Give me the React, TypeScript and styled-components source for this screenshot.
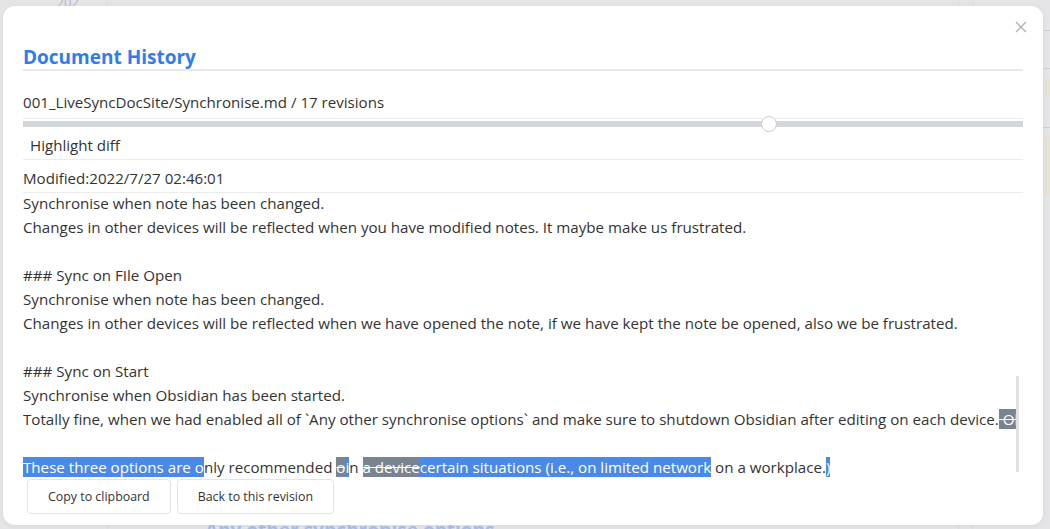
import { useLayoutEffect, useRef } from "react";
import styled, { createGlobalStyle } from "styled-components";

const Global = createGlobalStyle`
  html, body { margin: 0; padding: 0; }
  body {
    font-family: "Open Sans", "Noto Sans", sans-serif;
    background: #e5e5e8;
    overflow: hidden;
  }
`;

const Stage = styled.div`
  position: relative;
  width: 1050px;
  height: 529px;
  overflow: hidden;
  display: grid;
  grid-template-columns: 108px 1fr 92px;
  background: #e5e5e8;
`;

const Gutter = styled.div`
  border-right: 1px solid #dcdce0;
  color: #b8b8be;
  font-size: 13px;
  text-align: right;
  padding: 0 28px 0 0;
  line-height: 1;
  margin-top: -4px;
`;

const Page = styled.div`
  padding: 521px 0 0 97px;
`;

const PageHeading = styled.div`
  color: #a8c0ea;
  font-weight: 700;
  font-size: 19px;
  line-height: 1;
  white-space: nowrap;
`;

const SidePanel = styled.div`
  display: grid;
  grid-template-columns: 15px 1fr;
`;

const SideEdge = styled.div`
  border-left: 1px solid #dcdce0;
  border-right: 1px solid #dcdce0;
`;

const SideBody = styled.div`
  padding-top: 30px;
  display: flex;
  flex-direction: column;
`;

const SideRule = styled.div<{ $after: number }>`
  height: 1px;
  background: #cfcfd4;
  margin: 0 0 ${(p) => p.$after}px 50px;
`;

const SideNote = styled.div<{ $h: number; $after: number }>`
  height: ${(p) => p.$h}px;
  margin-bottom: ${(p) => p.$after}px;
  background: #e6e2d6;
  color: #c3b5b5;
  font-size: 15px;
  padding-left: 50px;
  line-height: 19px;
  white-space: pre;
`;

const Modal = styled.div`
  position: absolute;
  left: 3px;
  top: 6px;
  width: 1040px;
  height: 519px;
  box-sizing: border-box;
  padding: 38px 20px 11px;
  background: #fff;
  border-radius: 12px;
  box-shadow: 0 1px 6px rgba(0, 0, 0, 0.06);
  display: flex;
  flex-direction: column;
  color: #333;
`;

const Close = styled.button`
  position: absolute;
  top: 15px;
  right: 16px;
  width: 12px;
  height: 12px;
  padding: 0;
  border: 0;
  background: none;
  color: #b0b0b4;
  display: flex;
`;

const Title = styled.h2`
  margin: 0;
  padding-top: 1px;
  font-size: 19px;
  font-weight: 700;
  line-height: 24px;
  color: #2f7cf1;
  border-bottom: 2px solid #e7e9ec;
`;

const Info = styled.div`
  padding: 19px 0 4px;
  font-size: 15.1px;
  line-height: 24px;
  border-bottom: 1px solid #ececec;
`;

const Range = styled.input`
  -webkit-appearance: none;
  appearance: none;
  display: block;
  width: 100%;
  height: 6px;
  margin: 2px 0 0;
  background: #d3d6db;
  outline: none;

  &::-webkit-slider-thumb {
    -webkit-appearance: none;
    width: 16px;
    height: 16px;
    border-radius: 50%;
    background: #fff;
    border: 1px solid #c9cdd3;
    box-sizing: border-box;
  }
`;

const Row = styled.div<{ $indent?: number }>`
  padding: 6px ${(p) => p.$indent ?? 0}px 2px;
  font-size: 15.1px;
  line-height: 24px;
  border-bottom: 1px solid #ececec;
`;

const DiffWrap = styled.div`
  flex: 1;
  min-height: 0;
  display: flex;
  margin-right: 3px;
`;

const DiffArea = styled.div`
  flex: 1;
  min-width: 0;
  overflow-x: hidden;
  overflow-y: scroll;
  scrollbar-width: none;
  font-size: 15.15px;
  line-height: 24px;

  &::-webkit-scrollbar {
    display: none;
  }
`;

const ScrollTrack = styled.div`
  width: 4px;
  flex: none;
`;

const ScrollThumb = styled.div`
  width: 3px;
  background: #e2e2e2;
`;

const Line = styled.div`
  height: 24px;
  white-space: pre;
`;

const Ins = styled.span`
  background: #4a8ae6;
  color: #fff;
`;

const Del = styled.span`
  background: #7a8490;
  color: #fff;
  text-decoration: line-through;
`;

const Buttons = styled.div`
  display: flex;
  gap: 6px;
  padding-left: 4px;
`;

const Button = styled.button`
  height: 35px;
  padding: 0 20px;
  border: 1px solid #e4e4e4;
  border-radius: 4px;
  background: #fff;
  font-family: inherit;
  font-size: 12.4px;
  color: #333;
`;

const hiddenLines = [
  "# Synchronise",
  "",
  "There are some options to synchronise your vault.",
  "",
  "## LiveSync",
  "Synchronise all changes in real-time.",
  "This is the recommended way if you have a stable network connection.",
  "",
  "## Periodic Sync",
  "Synchronise periodically at the specified interval.",
  "Changes in other devices will be reflected after a while.",
  "",
  "## Any other synchronise options",
  "",
  "### Sync on Save",
  "Synchronise when note has been saved.",
  "Changes in other devices will be reflected when you have saved notes.",
  "",
  "### Batch database update",
  "Delay all changes, save once before replication or opening another file.",
  "",
  "",
  "### Sync on Editor Save",
];

const visibleLines = [
  "Synchronise when note has been changed.",
  "Changes in other devices will be reflected when you have modified notes. It maybe make us frustrated.",
  "",
  "### Sync on FIle Open",
  "Synchronise when note has been changed.",
  "Changes in other devices will be reflected when we have opened the note, if we have kept the note be opened, also we be frustrated.",
  "",
  "### Sync on Start",
  "Synchronise when Obsidian has been started.",
];

function CloseIcon() {
  return (
    <svg width="12" height="12" viewBox="0 0 12 12" fill="none" stroke="currentColor" strokeWidth="1.3">
      <path d="M1 1l10 10M11 1L1 11" />
    </svg>
  );
}

export default function App() {
  const diffRef = useRef<HTMLDivElement>(null);
  const revisions = 17;
  const current = 12;

  useLayoutEffect(() => {
    const el = diffRef.current;
    if (el) el.scrollTop = el.scrollHeight;
  }, []);

  return (
    <>
      <Global />
      <Stage>
        <Gutter>202</Gutter>
        <Page>
          <PageHeading>Any other synchronise options</PageHeading>
        </Page>
        <SidePanel>
          <SideEdge />
          <SideBody>
            <SideRule $after={37} />
            <SideRule $after={10} />
            <SideNote $h={17} $after={31}>ri</SideNote>
            <SideRule $after={7} />
            <SideNote $h={60} $after={0}>{"o\nd\n i\npi"}</SideNote>
          </SideBody>
        </SidePanel>

        <Modal>
          <Close aria-label="Close">
            <CloseIcon />
          </Close>
          <Title>Document History</Title>
          <Info>001_LiveSyncDocSite/Synchronise.md / {revisions} revisions</Info>
          <Range type="range" min={0} max={revisions - 1} defaultValue={current} />
          <Row $indent={7}>Highlight diff</Row>
          <Row>Modified:2022/7/27 02:46:01</Row>
          <DiffWrap>
            <DiffArea ref={diffRef}>
              {hiddenLines.map((l, i) => (
                <Line key={`h${i}`}>{l}</Line>
              ))}
              {visibleLines.map((l, i) => (
                <Line key={`v${i}`}>{l}</Line>
              ))}
              <Line>
                Totally fine, when we had enabled all of `Any other synchronise options` and make sure to shutdown Obsidian after editing on each device.
                <Del> Obsidian</Del>
              </Line>
              <Line />
              <Line>
                <Ins>These three options are o</Ins>nly recommended <Del>o</Del>
                <Ins>i</Ins>n <Del>a device</Del>
                <Ins>certain situations (i.e., on limited network</Ins> on a workplace.<Ins>)</Ins>
              </Line>
            </DiffArea>
            <ScrollTrack>
              <ScrollThumb style={{ marginTop: 183, height: 96 }} />
            </ScrollTrack>
          </DiffWrap>
          <Buttons>
            <Button>Copy to clipboard</Button>
            <Button>Back to this revision</Button>
          </Buttons>
        </Modal>
      </Stage>
    </>
  );
}
